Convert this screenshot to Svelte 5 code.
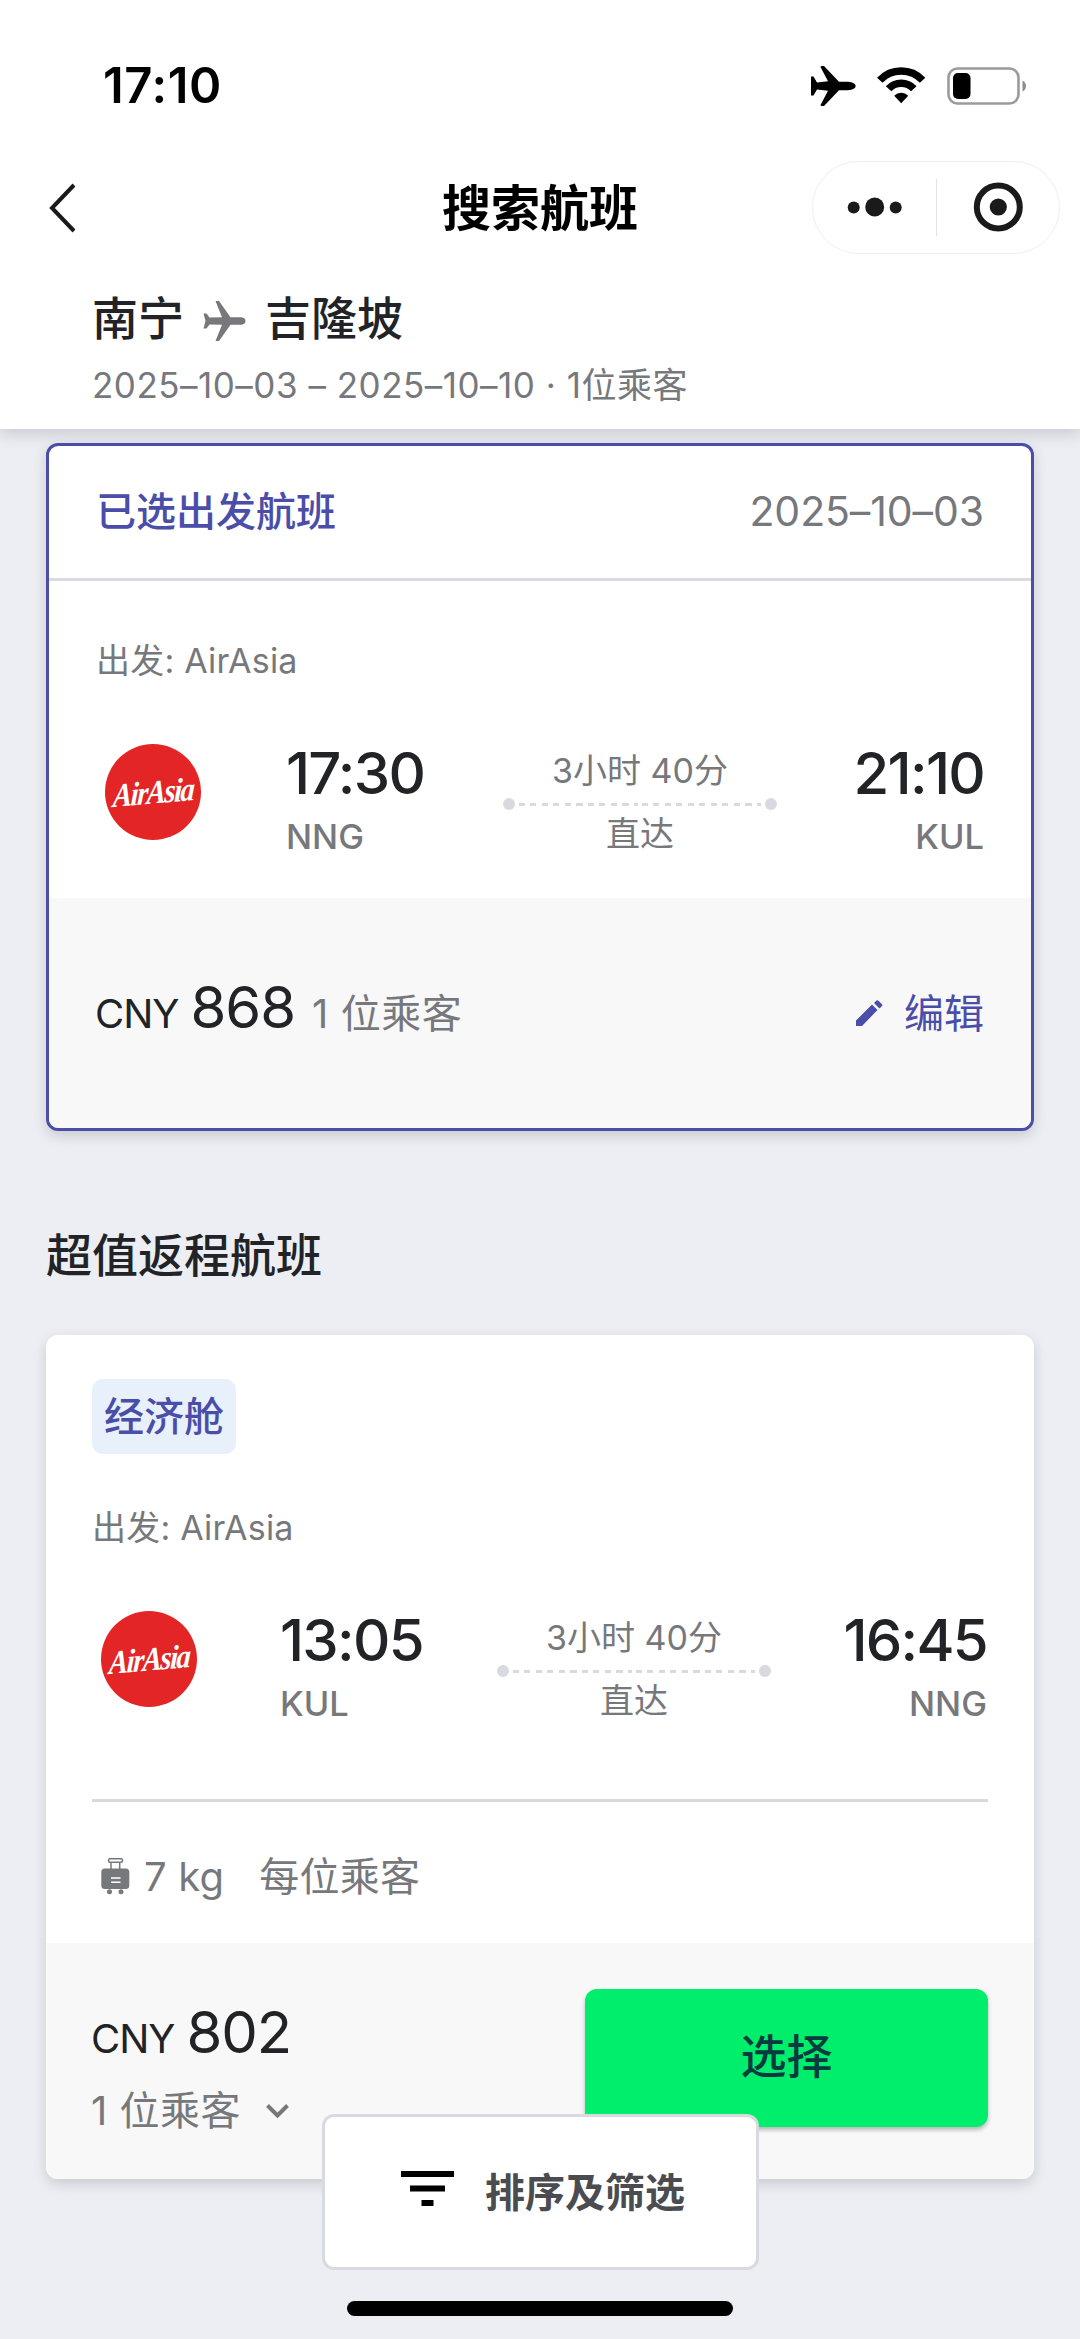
<script lang="ts">
	type Flight = {
		airline: string
		depart: string
		from: string
		arrive: string
		to: string
		duration: string
		stops: string
	}

	const outbound: Flight = {
		airline: 'AirAsia',
		depart: '17:30',
		from: 'NNG',
		arrive: '21:10',
		to: 'KUL',
		duration: '3小时 40分',
		stops: '直达'
	}

	const inbound: Flight = {
		airline: 'AirAsia',
		depart: '13:05',
		from: 'KUL',
		arrive: '16:45',
		to: 'NNG',
		duration: '3小时 40分',
		stops: '直达'
	}
</script>

{#snippet flightInfo(flight: Flight)}
	<div class="operator">出发: {flight.airline}</div>
	<div class="flight">
		<div class="logo"><span>{flight.airline}</span></div>
		<div class="stop">
			<div class="time">{flight.depart}</div>
			<div class="code">{flight.from}</div>
		</div>
		<div class="leg">
			<span>{flight.duration}</span>
			<div class="track"><i></i><b></b><b></b><i></i></div>
			<span>{flight.stops}</span>
		</div>
		<div class="stop end">
			<div class="time">{flight.arrive}</div>
			<div class="code">{flight.to}</div>
		</div>
	</div>
{/snippet}

<div class="page">
	<header>
		<div class="status">
			<span class="clock">17:10</span>
			<div class="indicators">
				<svg class="airplane" width="45" height="40" viewBox="0 0 45 40">
					<path
						d="M0 10.5H2.5L6 16.5L17 15.3L9.5 1Q9.5 0 11 0H13L28 15.7H37Q44.7 16.5 44.7 20Q44.7 23.5 37 24.3H28L13 40H11Q9.5 40 9.5 39L17 24.7L6 23.5L2.5 29.5H0Z"
					/>
				</svg>
				<svg class="wifi" width="49" height="37" viewBox="0 0 49 37">
					<g fill="none" stroke="#000" stroke-width="7.5">
						<path d="M2.8 13.3A29.3 29.3 0 0 1 45.6 13.3" />
						<path d="M11.6 21.8A17.2 17.2 0 0 1 36.8 21.8" />
					</g>
					<path d="M24.2 36.3L17.2 28.7A9.6 9.6 0 0 1 31.2 28.7Z" />
				</svg>
				<svg class="battery" width="80" height="38" viewBox="0 0 80 38">
					<rect x="1.5" y="1.5" width="70" height="35" rx="9" fill="none" stroke="#9b9b9b" stroke-width="2.6" />
					<rect x="6" y="6" width="17.5" height="26" rx="5" />
					<path d="M75.5 13.5Q79 15.5 79 19T75.5 24.5Z" fill="#8e8e8e" />
				</svg>
			</div>
		</div>

		<div class="nav">
			<svg class="back" width="30" height="52" viewBox="0 0 30 52">
				<path d="M26 3L4 26L26 49" fill="none" stroke="#1a1a1a" stroke-width="4" />
			</svg>
			<h1>搜索航班</h1>
			<div class="capsule">
				<svg width="246" height="91" viewBox="0 0 246 91">
					<g fill="#1a1a1a">
						<circle cx="40.7" cy="45.5" r="6" />
						<circle cx="61.7" cy="45" r="9.5" />
						<circle cx="82.7" cy="45.5" r="6" />
						<circle cx="185.3" cy="45" r="8.6" />
					</g>
					<path d="M123.5 17V74" stroke="#e3e3e3" stroke-width="1.2" />
					<circle cx="185.3" cy="45" r="21.5" fill="none" stroke="#1a1a1a" stroke-width="6" />
				</svg>
			</div>
		</div>

		<div class="route">
			<span>南宁</span>
			<svg width="43" height="40" viewBox="0 0 43 40">
				<path
					d="M.5 12.5H3.5L6.5 16.5L19 16.2L12.5 0H16L27.5 16.2H38.5Q42.5 16.7 42.5 20T38.5 23.8H27.5L16 40H12.5L19 23.8L6.5 23.5L3.5 27.5H.5L2.5 20Z"
					fill="#77787c"
				/>
			</svg>
			<span>吉隆坡</span>
		</div>
		<div class="summary">2025–10–03 – 2025–10–10 · 1位乘客</div>
	</header>

	<main>
		<section class="card selected">
			<div class="card-head">
				<h2>已选出发航班</h2>
				<span>2025–10–03</span>
			</div>
			<div class="body">
				{@render flightInfo(outbound)}
			</div>
			<div class="foot">
				<div class="price">
					<span class="currency">CNY</span>
					<span class="amount">868</span>
					<span class="pax">1 位乘客</span>
				</div>
				<a class="edit" href="#edit">
					<svg width="27" height="27" viewBox="0 0 27 27">
						<path d="M0 20.5L16 4.5L21.5 10L6 26H0ZM18 3L20.5.6Q21.5 0 22.5.8L26.2 4.5Q26.7 5.3 26 6L23.5 8.5Z" />
					</svg>
					编辑
				</a>
			</div>
		</section>

		<h3>超值返程航班</h3>

		<section class="card offer">
			<div class="body">
				<div class="cabin">经济舱</div>
				{@render flightInfo(inbound)}
				<div class="baggage">
					<svg width="29" height="37" viewBox="0 0 29 37">
						<g fill="none" stroke="#77787c" stroke-width="1.5">
							<rect x="7.5" y=".8" width="14" height="3.4" rx="1.5" />
							<path d="M10 4V11M18.7 4V11" />
						</g>
						<g fill="#77787c">
							<rect x=".3" y="10.5" width="28" height="20.5" rx="3.5" />
							<circle cx="8.5" cy="33.8" r="2.5" />
							<circle cx="20" cy="33.8" r="2.5" />
						</g>
						<path d="M10 20H19.5M10 24.3H19.5" stroke="#fff" stroke-width="1.4" />
					</svg>
					<span class="weight">7 kg</span>
					<span>每位乘客</span>
				</div>
			</div>
			<div class="foot">
				<div>
					<div class="price">
						<span class="currency">CNY</span>
						<span class="amount">802</span>
					</div>
					<div class="passengers">
						1 位乘客
						<svg width="23" height="14" viewBox="0 0 23 14">
							<path d="M1.5 1.5L11.5 11.5L21.5 1.5" fill="none" stroke="#77787c" stroke-width="4" />
						</svg>
					</div>
				</div>
				<button class="choose">选择</button>
			</div>
		</section>
	</main>

	<button class="sort">
		<svg width="53" height="36" viewBox="0 0 53 36">
			<path d="M0 0H53V6H0ZM9 14.5H44V20.5H9ZM20.5 29H32.5V35H20.5Z" />
		</svg>
		排序及筛选
	</button>
	<div class="home-bar"></div>
</div>

<style>
	:global(body) {
		margin: 0;
	}

	.page {
		position: relative;
		display: flex;
		flex-direction: column;
		width: 1080px;
		height: 2339px;
		overflow: hidden;
		background: #edeef3;
		color: #222326;
		font-family: Inter, 'Noto Sans CJK SC', sans-serif;
		line-height: 1.2;
	}

	.page * {
		box-sizing: border-box;
	}

	svg {
		display: block;
		flex: none;
	}

	h1,
	h2,
	h3 {
		margin: 0;
	}

	button {
		font-family: inherit;
		line-height: inherit;
	}

	header {
		z-index: 1;
		height: 429px;
		background: #fff;
		box-shadow: 0 6px 14px rgba(0, 0, 0, 0.14);
	}

	.status {
		display: flex;
		justify-content: space-between;
		align-items: center;
		height: 161px;
		padding: 10px 53px 0 103px;
	}

	.clock {
		color: #000;
		font-size: 49px;
		font-weight: 600;
		letter-spacing: 0.6px;
		line-height: 60px;
	}

	.indicators {
		display: flex;
		align-items: center;
		gap: 21px;
	}

	.nav {
		display: grid;
		grid-template-columns: 1fr auto 1fr;
		align-items: center;
		height: 93px;
		padding: 0 20px;
	}

	.back {
		margin-left: 28px;
	}

	h1 {
		padding-top: 2px;
		color: #000;
		font-size: 49px;
		font-weight: 600;
		line-height: 60px;
	}

	.capsule {
		justify-self: end;
		width: 248px;
		height: 93px;
		border: 1px solid #efefef;
		border-radius: 47px;
	}

	.route {
		display: flex;
		align-items: center;
		height: 60px;
		margin-top: 35px;
		padding-left: 92px;
		gap: 19px;
		font-size: 46px;
		font-weight: 500;
	}

	.route svg {
		margin-top: 3px;
	}

	.summary {
		padding: 10px 0 0 92px;
		color: #77787c;
		font-size: 35px;
		letter-spacing: 0.5px;
		line-height: 52px;
	}

	main {
		padding: 14px 46px 0;
	}

	.card {
		border-radius: 12px;
		background: #fff;
		box-shadow: 0 5px 14px rgba(0, 0, 0, 0.15);
		overflow: hidden;
	}

	.selected {
		height: 688px;
		border: 3px solid #4a4ea8;
	}

	.card-head {
		display: flex;
		justify-content: space-between;
		align-items: center;
		height: 135px;
		padding: 0 47px;
		border-bottom: 3px solid #d9dbe0;
	}

	.card-head h2 {
		color: #4a4ea8;
		font-size: 40px;
		font-weight: 500;
	}

	.card-head span {
		color: #77787c;
		font-size: 41px;
		letter-spacing: -0.1px;
	}

	.selected .body {
		height: 317px;
		padding: 55px 47px 0 47px;
	}

	.operator {
		margin-bottom: 50px;
		color: #77787c;
		font-size: 34px;
		letter-spacing: 0.2px;
		line-height: 50px;
	}

	.flight {
		display: grid;
		grid-template-columns: 190px 217px 274px 1fr;
		height: 122px;
	}

	.offer .flight {
		grid-template-columns: 188px 217px 274px 1fr;
		padding-right: 1px;
	}

	.logo {
		display: flex;
		align-items: center;
		justify-content: center;
		width: 96px;
		height: 96px;
		margin: 8px 0 0 9px;
		border-radius: 50%;
		background: #e32526;
		color: #fff;
		font-family: 'Liberation Serif', serif;
		font-size: 29px;
		font-style: italic;
		font-weight: 700;
		letter-spacing: -1.6px;
	}

	.logo span {
		transform: rotate(-5deg) skewX(-8deg) scaleY(1.15);
	}

	.time {
		padding-top: 4px;
		font-size: 58px;
		font-weight: 500;
		letter-spacing: -1.7px;
		line-height: 66px;
	}

	.code {
		margin-top: 9px;
		color: #77787c;
		font-size: 34.5px;
		font-weight: 500;
		line-height: 44px;
	}

	.end {
		text-align: right;
	}

	.leg {
		display: flex;
		flex-direction: column;
		align-items: center;
		padding-top: 13px;
		color: #77787c;
		font-size: 34px;
		line-height: 44px;
	}

	.track {
		display: flex;
		align-items: center;
		gap: 4px;
		width: 274px;
		margin: 5px 0 2px;
	}

	.track i {
		width: 12px;
		height: 12px;
		border-radius: 50%;
		background: #d9dae0;
	}

	.track b {
		flex: 1;
		height: 3px;
		background: repeating-linear-gradient(90deg, #d9dae0 0 6px, transparent 6px 11.5px);
	}

	.foot {
		display: flex;
		justify-content: space-between;
		background: #f8f8f8;
	}

	.selected .foot {
		height: 230px;
		padding: 76px 47px 0 46px;
	}

	.price {
		display: flex;
		align-items: baseline;
		line-height: 66px;
	}

	.currency {
		font-size: 40px;
		letter-spacing: -1px;
	}

	.amount {
		margin-left: 12px;
		font-size: 58px;
		letter-spacing: -1.1px;
	}

	.pax {
		margin-left: 17px;
		color: #77787c;
		font-size: 40px;
		letter-spacing: 0.6px;
	}

	.edit {
		display: flex;
		align-items: center;
		gap: 21px;
		height: 79px;
		color: #4a4ea8;
		font-size: 40px;
		text-decoration: none;
	}

	.edit svg {
		fill: #4a4ea8;
	}

	h3 {
		margin: 94px 0 50px;
		font-size: 46px;
		font-weight: 500;
		line-height: 60px;
	}

	.offer {
		height: 844px;
	}

	.offer .body {
		height: 608px;
		padding: 44px 46px 0;
	}

	.cabin {
		width: 144px;
		height: 75px;
		margin-bottom: 49px;
		border-radius: 11px;
		background: #e8f1fb;
		color: #4a4ea8;
		font-size: 40px;
		font-weight: 500;
		line-height: 76px;
		text-align: center;
	}

	.baggage {
		display: flex;
		align-items: center;
		height: 152px;
		margin-top: 74px;
		padding-left: 9px;
		border-top: 3px solid #d9dae0;
		color: #77787c;
		font-size: 40px;
		letter-spacing: 0.2px;
	}

	.weight {
		margin: 0 35px 0 14px;
	}

	.offer .foot {
		height: 236px;
		padding: 46px 46px 0 45px;
	}

	.offer .price {
		padding-top: 10px;
	}

	.passengers {
		display: flex;
		align-items: center;
		gap: 25px;
		margin-top: 14px;
		color: #77787c;
		font-size: 40px;
		letter-spacing: 0.5px;
		line-height: 50px;
	}

	.choose {
		width: 403px;
		height: 138px;
		padding: 0 0 2px;
		border: 0;
		border-radius: 12px;
		background: #00ee6c;
		box-shadow: 0 3px 4px rgba(0, 0, 0, 0.25);
		color: #063c40;
		font-size: 46px;
		font-weight: 500;
	}

	/* floats over the end of the results list */
	.sort {
		position: absolute;
		top: 2114px;
		left: 322px;
		display: flex;
		align-items: center;
		gap: 31px;
		width: 437px;
		height: 156px;
		padding: 2px 0 0 76px;
		border: 3px solid #d9dadf;
		border-radius: 12px;
		background: #fff;
		color: #4b4c50;
		font-size: 40px;
		font-weight: 600;
	}

	.sort svg {
		margin-bottom: 8px;
	}

	.home-bar {
		position: absolute;
		bottom: 23px;
		left: 347px;
		width: 386px;
		height: 15px;
		border-radius: 8px;
		background: #000;
	}
</style>
